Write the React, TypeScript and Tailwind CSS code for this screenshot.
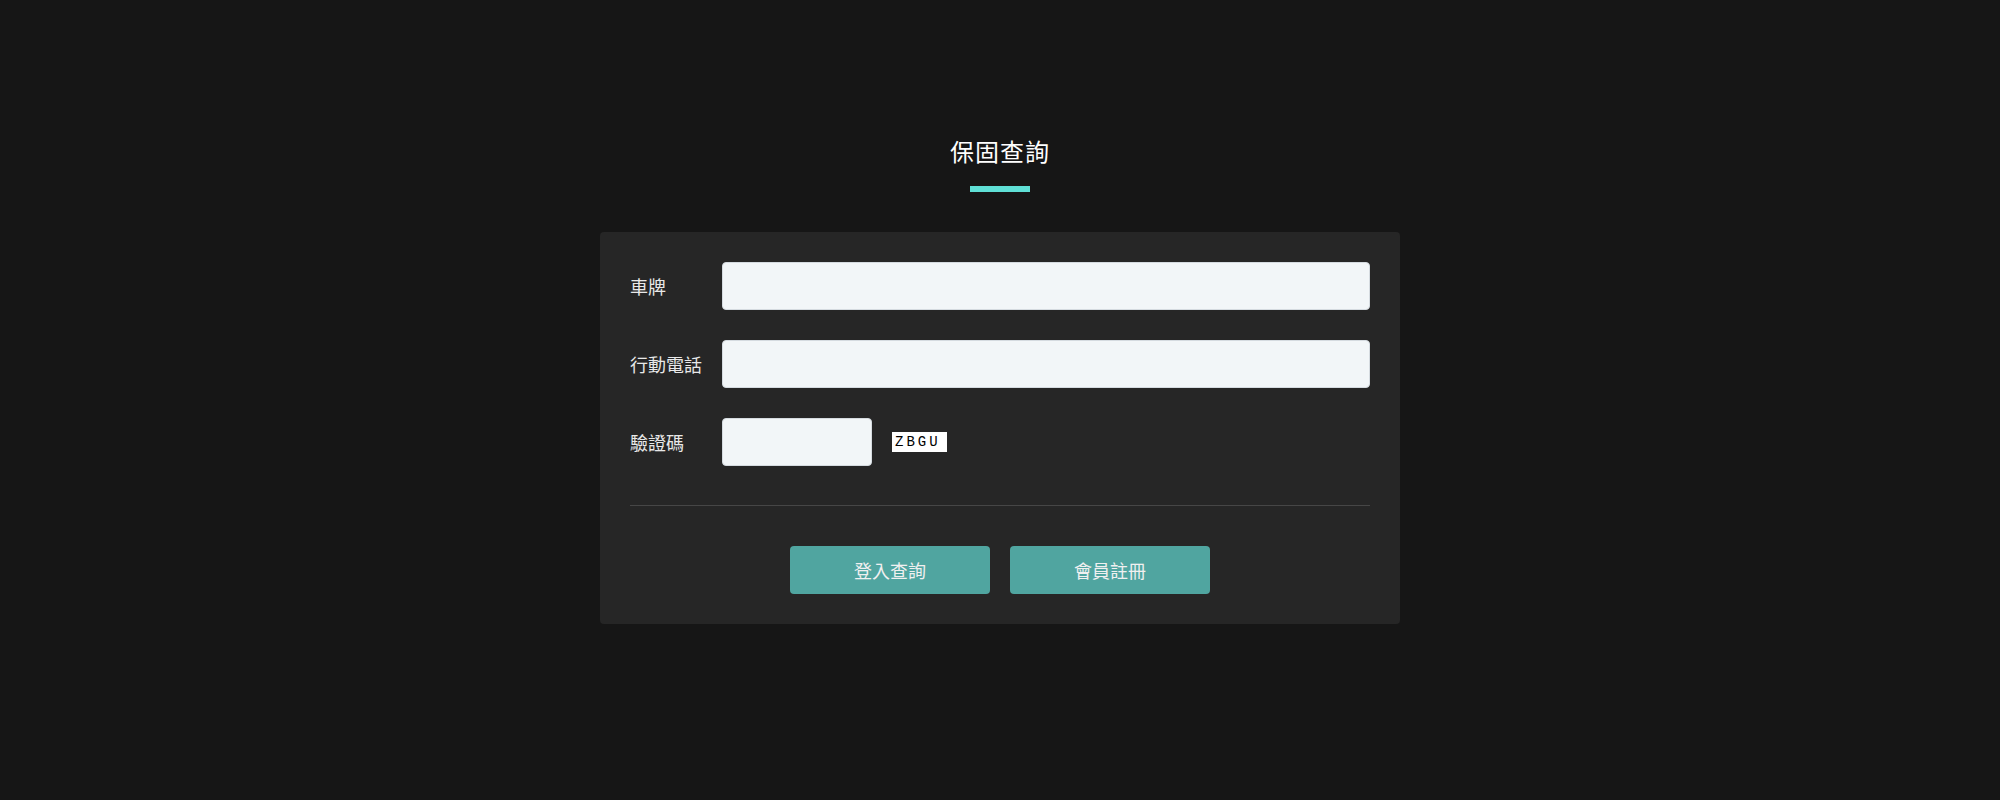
const fontStack = { fontFamily: '"Noto Sans CJK TC", "Noto Sans", sans-serif' };

function Field({ label, children }: { label: string; children: React.ReactNode }) {
  return (
    <div className="flex items-center">
      <label className="w-[92px] shrink-0 text-[18px] text-[#e8e8e8]">{label}</label>
      {children}
    </div>
  );
}

export default function App() {
  return (
    <div className="min-h-[800px] w-full bg-[#161616] pt-[133px]" style={fontStack}>
      <div className="flex flex-col items-center">
        <h1 className="text-[24px] leading-[36px] tracking-[1px] text-white">保固查詢</h1>
        <div className="mt-[17px] h-[6px] w-[60px] bg-[#5fdfd5]" />
      </div>

      <div className="mx-auto mt-[40px] w-[800px] rounded-[4px] bg-[#262626] px-[30px] pt-[30px] pb-[30px]">
        <div className="flex flex-col gap-[30px]">
          <Field label="車牌">
            <input className="h-[48px] flex-1 rounded-[4px] border border-[#d5dbe0] bg-[#f2f6f8] px-3 outline-none" />
          </Field>
          <Field label="行動電話">
            <input className="h-[48px] flex-1 rounded-[4px] border border-[#d5dbe0] bg-[#f2f6f8] px-3 outline-none" />
          </Field>
          <Field label="驗證碼">
            <input className="h-[48px] w-[150px] rounded-[4px] border border-[#d5dbe0] bg-[#f2f6f8] px-3 outline-none" />
            <span
              className="ml-[20px] flex h-[20px] w-[55px] items-center bg-white pl-[3px] text-[14px] leading-none tracking-[3px] text-black"
              style={{ fontFamily: '"Liberation Mono", monospace' }}
            >
              ZBGU
            </span>
          </Field>
        </div>

        <div className="mt-[39px] h-px bg-[#464646]" />

        <div className="mt-[40px] flex justify-center gap-[20px]">
          <button className="h-[48px] w-[200px] rounded-[4px] bg-[#50a5a0] text-[18px] text-[#f0f0f0]">登入查詢</button>
          <button className="h-[48px] w-[200px] rounded-[4px] bg-[#50a5a0] text-[18px] text-[#f0f0f0]">會員註冊</button>
        </div>
      </div>
    </div>
  );
}
